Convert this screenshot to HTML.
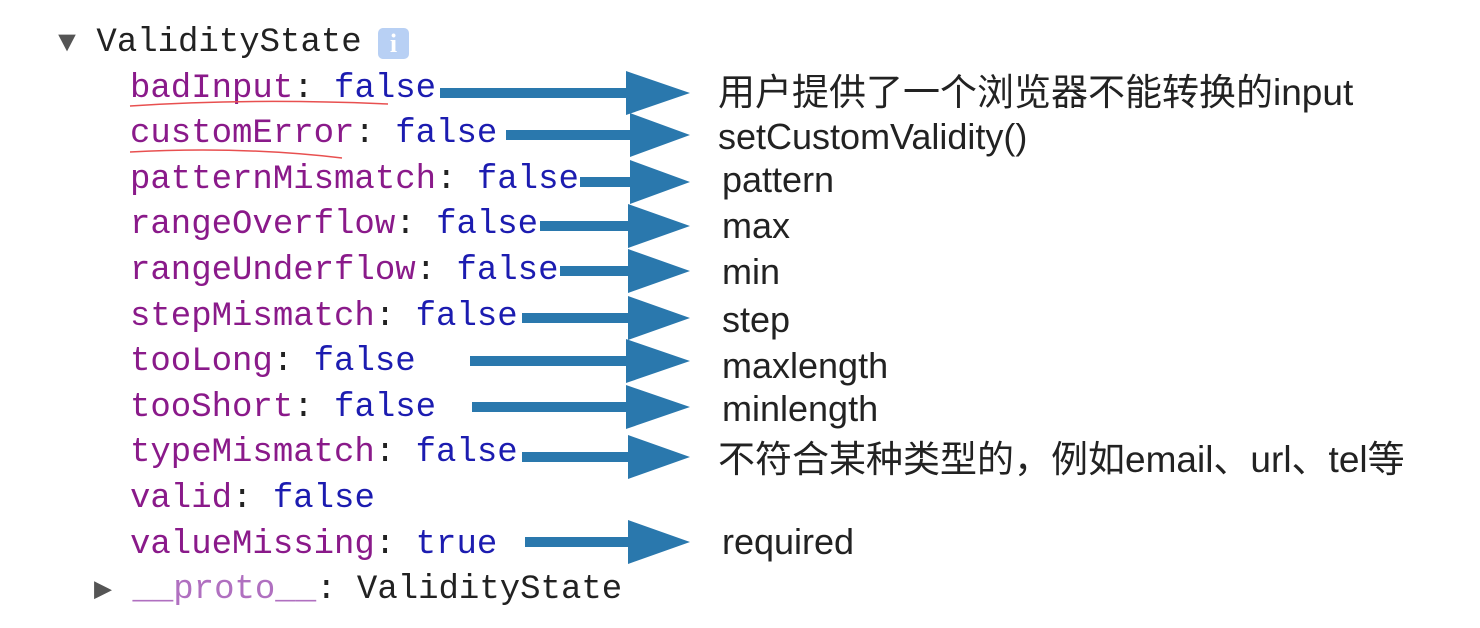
<!DOCTYPE html>
<html><head><meta charset="utf-8"><style>
html,body{margin:0;padding:0;background:#fff;width:1480px;height:628px;overflow:hidden;position:relative}
.m{position:absolute;font-family:"Liberation Mono",monospace;font-size:34px;line-height:46px;white-space:pre;color:#222}
.k{color:#8a1a8a}.v{color:#1c1cb0}.p{color:#b070c0}
.t{position:absolute;left:722px;font-family:"Liberation Sans","Noto Sans CJK SC",sans-serif;font-size:35px;line-height:46px;color:#222;white-space:pre;letter-spacing:0}
svg{position:absolute;left:0;top:0}
</style></head><body>
<div class="m" style="left:58px;top:20px"><span style="color:#555;font-size:30px">▼</span> ValidityState</div>
<div style="position:absolute;left:378px;top:28px;width:31px;height:31px;background:#b8d0f4;border-radius:5px;color:#fff;font:bold 26px 'Liberation Serif',serif;text-align:center;line-height:31px">i</div>
<div class="m" style="left:130px;top:66px"><span class="k">badInput</span>: <span class="v">false</span></div>
<div class="m" style="left:130px;top:111px"><span class="k">customError</span>: <span class="v">false</span></div>
<div class="m" style="left:130px;top:157px"><span class="k">patternMismatch</span>: <span class="v">false</span></div>
<div class="m" style="left:130px;top:202px"><span class="k">rangeOverflow</span>: <span class="v">false</span></div>
<div class="m" style="left:130px;top:248px"><span class="k">rangeUnderflow</span>: <span class="v">false</span></div>
<div class="m" style="left:130px;top:294px"><span class="k">stepMismatch</span>: <span class="v">false</span></div>
<div class="m" style="left:130px;top:339px"><span class="k">tooLong</span>: <span class="v">false</span></div>
<div class="m" style="left:130px;top:385px"><span class="k">tooShort</span>: <span class="v">false</span></div>
<div class="m" style="left:130px;top:430px"><span class="k">typeMismatch</span>: <span class="v">false</span></div>
<div class="m" style="left:130px;top:476px"><span class="k">valid</span>: <span class="v">false</span></div>
<div class="m" style="left:130px;top:522px"><span class="k">valueMissing</span>: <span class="v">true</span></div>
<div class="m" style="left:94px;top:567px"><span style="color:#555;font-size:30px">▶</span> <span class="p">__proto__</span>: ValidityState</div>
<svg width="1480" height="628">
<path d="M130 106 Q250 98 388 104" stroke="#e85050" stroke-width="1.5" fill="none"/>
<path d="M130 152 Q240 146 342 158" stroke="#e85050" stroke-width="1.5" fill="none"/>
<g fill="#2a78ad">
<path d="M440 88h186v-17l64 22l-64 22v-17h-186z"/>
<path d="M506 130h124v-17l60 22l-60 22v-17h-124z"/>
<path d="M580 177h50v-17l60 22l-60 22v-17h-50z"/>
<path d="M540 221h88v-17l62 22l-62 22v-17h-88z"/>
<path d="M560 266h68v-17l62 22l-62 22v-17h-68z"/>
<path d="M522 313h106v-17l62 22l-62 22v-17h-106z"/>
<path d="M470 356h156v-17l64 22l-64 22v-17h-156z"/>
<path d="M472 402h154v-17l64 22l-64 22v-17h-154z"/>
<path d="M522 452h106v-17l62 22l-62 22v-17h-106z"/>
<path d="M525 537h103v-17l62 22l-62 22v-17h-103z"/>
</g>
</svg>
<div class="t" style="left:718px;top:70px;font-size:37px">用户提供了一个浏览器不能转换的input</div>
<div class="t" style="left:718px;top:114px;font-size:36px">setCustomValidity()</div>
<div class="t" style="top:157px;font-size:36px">pattern</div>
<div class="t" style="top:203px;font-size:36px">max</div>
<div class="t" style="top:249px;font-size:36px">min</div>
<div class="t" style="top:297px;font-size:36px">step</div>
<div class="t" style="top:343px;font-size:36px">maxlength</div>
<div class="t" style="top:386px;font-size:36px">minlength</div>
<div class="t" style="left:718px;top:437px;font-size:37px">不符合某种类型的，例如email、url、tel等</div>
<div class="t" style="top:519px;font-size:36px">required</div>
</body></html>
